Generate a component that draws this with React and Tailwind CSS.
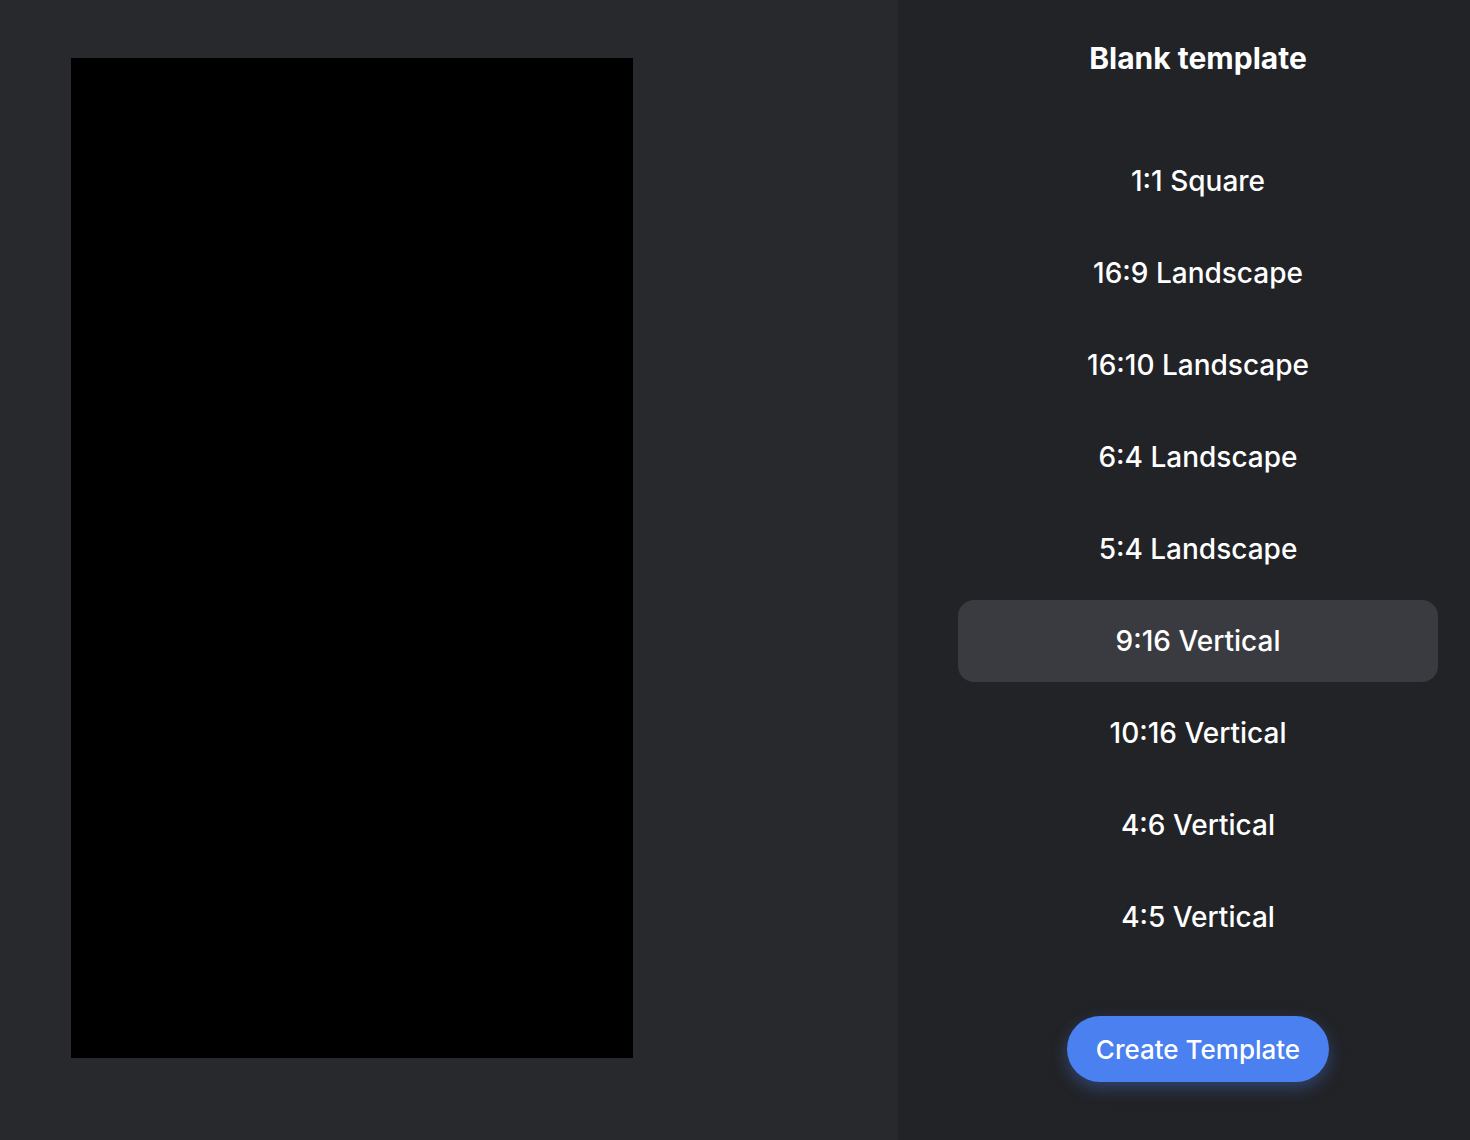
import React, { useState } from "react";

const sizes = [
  "1:1 Square",
  "16:9 Landscape",
  "16:10 Landscape",
  "6:4 Landscape",
  "5:4 Landscape",
  "9:16 Vertical",
  "10:16 Vertical",
  "4:6 Vertical",
  "4:5 Vertical",
];

const App = () => {
  const [selected, setSelected] = useState("9:16 Vertical");

  return (
    <div
      className="flex w-full h-[1140px] overflow-hidden"
      style={{ fontFamily: "Inter, 'Noto Sans', sans-serif" }}
    >
      {/* Preview */}
      <div className="w-[898px] shrink-0 bg-[#28292d] pl-[71px] pt-[58px]">
        <div className="w-[562px] h-[1000px] bg-black" />
      </div>

      {/* Sidebar */}
      <div className="flex-1 bg-[#222327] pl-[60px] pr-[32px] flex flex-col items-center">
        <h2 className="mt-[39px] text-[30px] leading-[38px] font-bold text-white">
          Blank template
        </h2>

        <div className="w-full mt-[63px] flex flex-col gap-[10px]">
          {sizes.map((s) => (
            <button
              key={s}
              onClick={() => setSelected(s)}
              className={
                "w-full h-[82px] rounded-[16px] flex items-center justify-center text-[28px] font-medium text-white " +
                (selected === s ? "bg-[#3a3b40]" : "bg-transparent")
              }
            >
              {s}
            </button>
          ))}
        </div>

        <button className="mt-[58px] w-[262px] h-[66px] rounded-full bg-[#4a80f0] text-white text-[26px] font-medium shadow-[0_6px_16px_rgba(74,128,240,0.35)]">
          Create Template
        </button>
      </div>
    </div>
  );
};

export default App;
